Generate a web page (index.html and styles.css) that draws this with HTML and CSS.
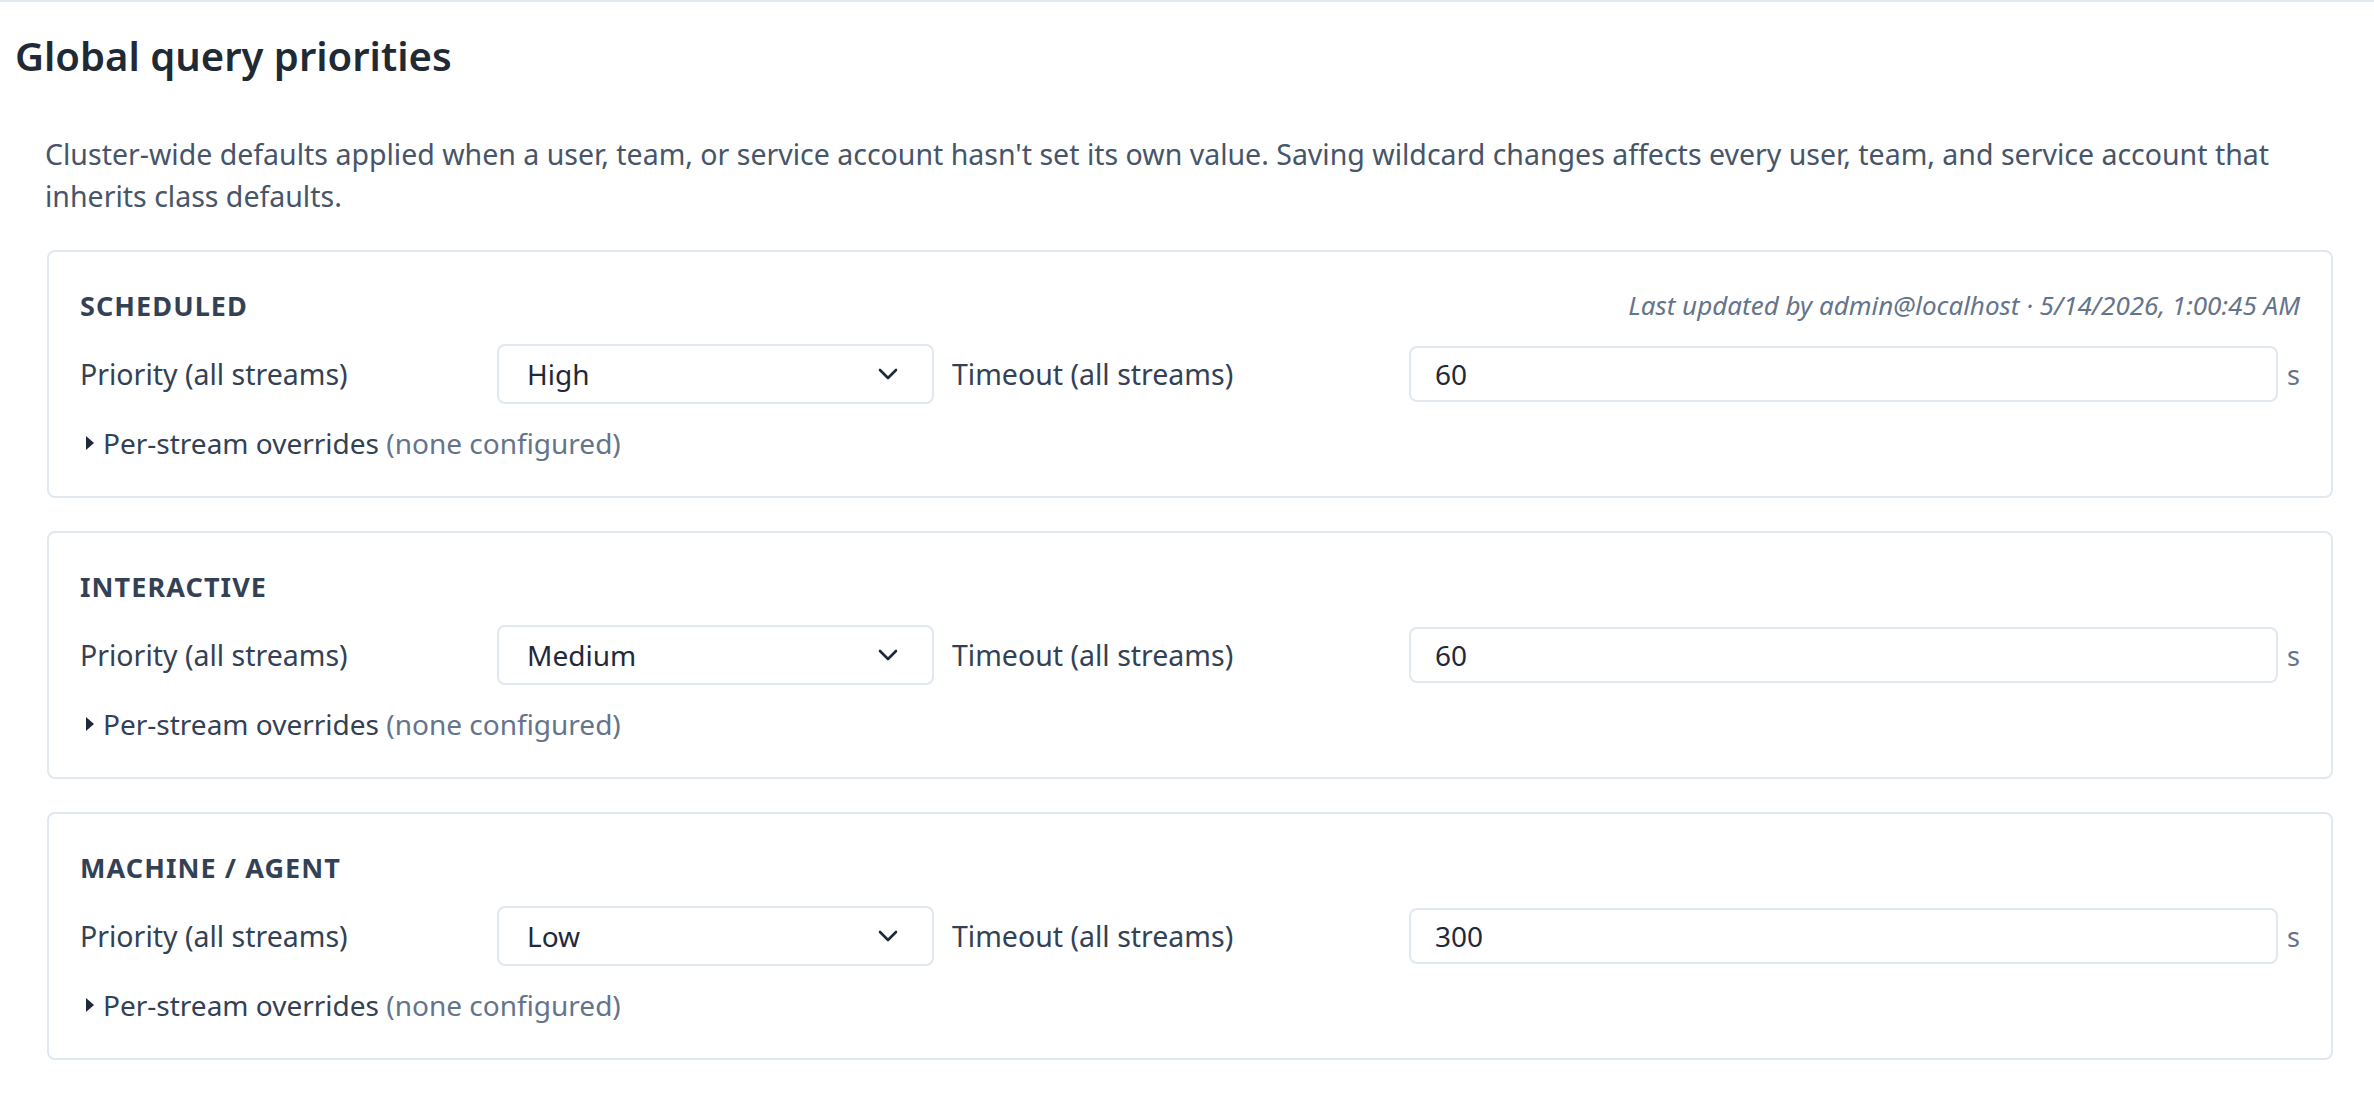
FILE: index.html
```html
<!DOCTYPE html>
<html lang="en">
<head>
<meta charset="utf-8">
<title>Global query priorities</title>
<link rel="stylesheet" href="styles.css">
</head>
<body>
<div class="page">
  <h1 class="title">Global query priorities</h1>
  <div class="section">
    <p class="desc">Cluster-wide defaults applied when a user, team, or service account hasn't set its own value. Saving wildcard changes affects every user, team, and service account that inherits class defaults.</p>

    <div class="card">
      <div class="card-head">
        <span class="class-name">SCHEDULED</span>
        <span class="meta">Last updated by admin@localhost · 5/14/2026, 1:00:45 AM</span>
      </div>
      <div class="row">
        <span class="label">Priority (all streams)</span>
        <div class="select"><span>High</span><svg class="chev" viewBox="0 0 20 12" width="20" height="12"><path d="M2 2 L10 10 L18 2" fill="none" stroke="#1e293b" stroke-width="2.6" stroke-linecap="round" stroke-linejoin="round"/></svg></div>
        <span class="label">Timeout (all streams)</span>
        <div class="timeout"><div class="input">60</div><span class="unit">s</span></div>
      </div>
      <div class="overrides"><span class="caret"></span>Per-stream overrides <span class="muted">(none configured)</span></div>
    </div>

    <div class="card">
      <div class="card-head">
        <span class="class-name">INTERACTIVE</span>
      </div>
      <div class="row">
        <span class="label">Priority (all streams)</span>
        <div class="select"><span>Medium</span><svg class="chev" viewBox="0 0 20 12" width="20" height="12"><path d="M2 2 L10 10 L18 2" fill="none" stroke="#1e293b" stroke-width="2.6" stroke-linecap="round" stroke-linejoin="round"/></svg></div>
        <span class="label">Timeout (all streams)</span>
        <div class="timeout"><div class="input">60</div><span class="unit">s</span></div>
      </div>
      <div class="overrides"><span class="caret"></span>Per-stream overrides <span class="muted">(none configured)</span></div>
    </div>

    <div class="card">
      <div class="card-head">
        <span class="class-name">MACHINE / AGENT</span>
      </div>
      <div class="row">
        <span class="label">Priority (all streams)</span>
        <div class="select"><span>Low</span><svg class="chev" viewBox="0 0 20 12" width="20" height="12"><path d="M2 2 L10 10 L18 2" fill="none" stroke="#1e293b" stroke-width="2.6" stroke-linecap="round" stroke-linejoin="round"/></svg></div>
        <span class="label">Timeout (all streams)</span>
        <div class="timeout"><div class="input">300</div><span class="unit">s</span></div>
      </div>
      <div class="overrides"><span class="caret"></span>Per-stream overrides <span class="muted">(none configured)</span></div>
    </div>
  </div>
</div>
</body>
</html>
```

FILE: styles.css
```css
* { box-sizing: border-box; }
html, body { margin: 0; padding: 0; background: #ffffff; }
body {
  font-family: "Noto Sans", "Open Sans", sans-serif;
  color: #334155;
}
.page {
  border-top: 2px solid #e2e8f0;
  padding: 0 41px 40px 15px;
}
.title {
  margin: 0;
  padding-top: 28px;
  font-size: 40px;
  line-height: 52px;
  font-weight: 600;
  color: #1f2a35;
}
.section {
  padding-left: 32px;
  padding-top: 51px;
}
.desc {
  margin: 0 0 33px -2px;
  font-size: 28.5px;
  line-height: 42px;
  color: #475569;
}
.card {
  border: 2px solid #e2e8f0;
  border-radius: 8px;
  padding: 34px 31px 33px 31px;
  margin-bottom: 33px;
}
.card-head {
  display: flex;
  justify-content: space-between;
  align-items: center;
  height: 38px;
}
.class-name {
  font-size: 27px;
  font-weight: 700;
  letter-spacing: 0.04em;
  color: #334155;
}
.meta {
  font-size: 26px;
  font-style: italic;
  color: #64748b;
}
.row {
  display: grid;
  grid-template-columns: 399px 437px 439px 1fr;
  column-gap: 18px;
  align-items: center;
  margin-top: 20px;
  height: 60px;
}
.label {
  font-size: 28.5px;
  color: #334155;
}
.select {
  height: 60px;
  border: 2px solid #e2e8f0;
  border-radius: 8px;
  display: flex;
  align-items: center;
  justify-content: space-between;
  padding: 0 34px 0 28px;
  font-size: 28px;
  color: #1e293b;
}
.chev { display: block; }
.timeout {
  display: flex;
  align-items: center;
  gap: 9px;
}
.input {
  flex: 1;
  height: 56px;
  border: 2px solid #e2e8f0;
  border-radius: 8px;
  display: flex;
  align-items: center;
  padding-left: 24px;
  font-size: 28px;
  color: #1e293b;
}
.unit {
  font-size: 27px;
  color: #64748b;
}
.overrides {
  margin-top: 19px;
  height: 40px;
  display: flex;
  align-items: center;
  font-size: 28px;
  color: #334155;
  white-space: pre;
  padding-left: 6px;
}
.caret {
  width: 0;
  height: 0;
  border-top: 7px solid transparent;
  border-bottom: 7px solid transparent;
  border-left: 8px solid #1e293b;
  margin-right: 9px;
}
.muted { color: #64748b; }
```
